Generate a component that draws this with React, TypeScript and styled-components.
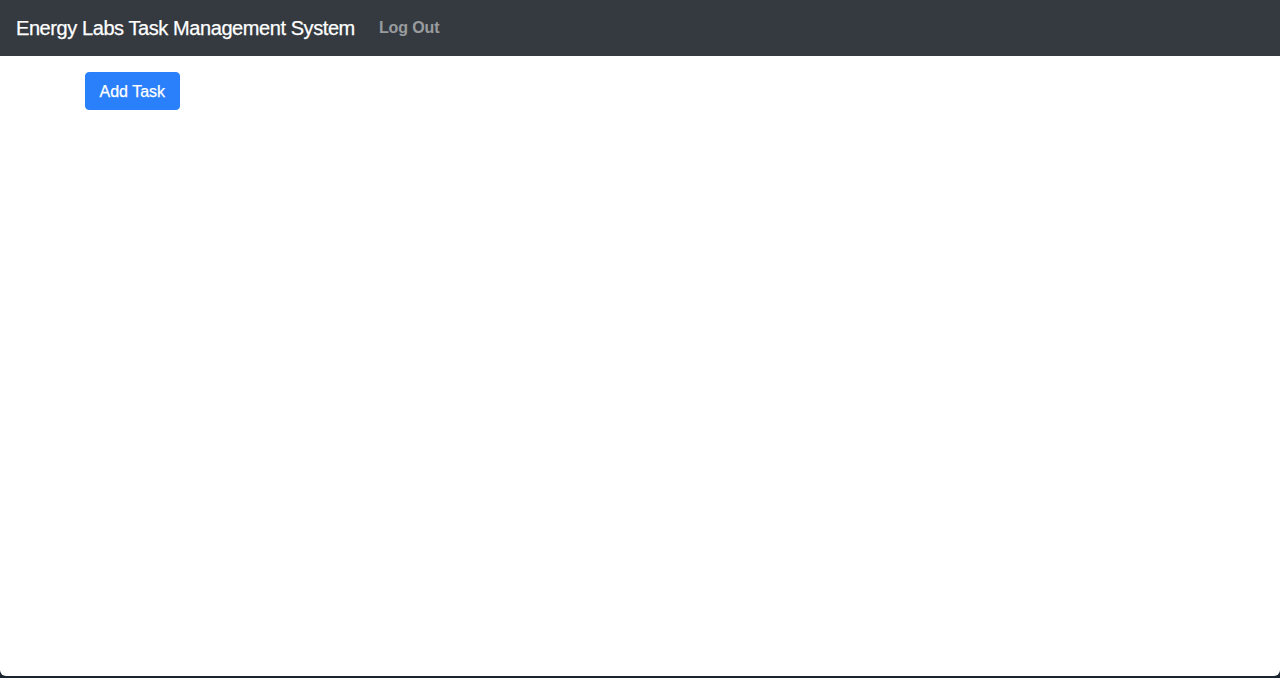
import React from "react";
import styled, { createGlobalStyle } from "styled-components";

const Global = createGlobalStyle`
  html, body { margin: 0; padding: 0; background: #1b2331; }
  body { font-family: "Liberation Sans", Arial, sans-serif; }
  * { box-sizing: border-box; }
`;

const Window = styled.div`
  height: 676px;
  background: #ffffff;
  border-radius: 0 0 6px 6px;
  overflow: hidden;
  display: flex;
  flex-direction: column;
`;

const NavBar = styled.nav`
  height: 56px;
  background: #343a40;
  display: flex;
  align-items: center;
  padding: 0 16px;
`;

const Brand = styled.span`
  color: #ffffff;
  font-size: 20px;
  letter-spacing: -0.42px;
  margin-right: 24px;
  -webkit-text-stroke: 0.25px #ffffff;
`;

const NavLink = styled.a`
  color: rgba(255, 255, 255, 0.5);
  font-size: 16px;
  font-weight: 600;
  letter-spacing: -0.1px;
  text-decoration: none;
  cursor: pointer;
`;

const Container = styled.main`
  width: 1140px;
  margin: 0 auto;
  padding: 16px 15px 0;
`;

const PrimaryButton = styled.button`
  background: #2a7ffb;
  color: #ffffff;
  border: 1px solid #2a7ffb;
  border-radius: 4px;
  height: 38px;
  padding: 1px 13.5px 0;
  font-family: inherit;
  font-size: 16px;
  -webkit-text-stroke: 0.25px #ffffff;
  cursor: pointer;
`;

export default function App() {
  return (
    <>
      <Global />
      <Window>
        <NavBar>
          <Brand>Energy Labs Task Management System</Brand>
          <NavLink>Log Out</NavLink>
        </NavBar>
        <Container>
          <PrimaryButton>Add Task</PrimaryButton>
        </Container>
      </Window>
    </>
  );
}
